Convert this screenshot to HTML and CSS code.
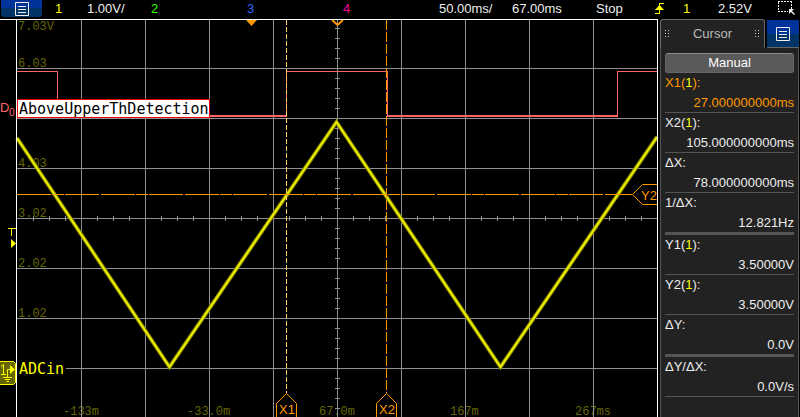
FILE: index.html
```html
<!DOCTYPE html>
<html lang="en">
<head>
<meta charset="utf-8">
<title>Oscilloscope</title>
<link rel="stylesheet" href="styles.css">
</head>
<body>
<div class="scope">
  <header class="status">
    <button class="menu menu-main" aria-label="Main menu">
      <svg width="14" height="14" viewBox="0 0 14 14"><path d="M.5.5h13v13H.5zM3 4.5h8M3 7.5h8M3 10.5h8"/></svg>
    </button>
    <div class="channel"><span class="ch1">1</span><span>1.00V/</span></div>
    <div class="channel ch2">2</div>
    <div class="channel ch3">3</div>
    <div class="channel ch4">4</div>
    <div>50.00ms/</div>
    <div>67.00ms</div>
    <div>Stop</div>
    <svg class="edge" width="10" height="12" viewBox="0 0 10 12"><path class="edge-line" d="M0 11.5h5M4.5 11V1M4 1.5h5"/><path class="edge-head" d="M0 8L4.5 3L9 8z"/></svg>
    <div class="ch1">1</div>
    <div>2.52V</div>
    <svg class="zone" width="20" height="16" viewBox="0 0 20 16"><path class="zone-box" d="M1 1.5h13M1.5 2v10M1 11.5h10M14.5 1v8"/><path class="zone-arrow" d="M12 9h5l-2 2 3 3-1 1-3-3-2 2z"/></svg>
  </header>

  <main class="plot">
    <svg class="screen" viewBox="0 19 660 398" role="img" aria-label="Waveform display">
      <g class="scale">
        <text x="18" y="30">7.03V</text>
        <text x="18" y="67">6.03</text>
        <text x="18" y="167">4.03</text>
        <text x="18" y="217">3.02</text>
        <text x="18" y="267">2.02</text>
        <text x="18" y="317">1.02</text>
        <text x="63" y="415">-133m</text>
        <text x="187" y="415">-33.0m</text>
        <text x="319" y="415">67.0m</text>
        <text x="450" y="415">167m</text>
        <text x="575" y="415">267ms</text>
      </g>
      <path class="grid" d="M81.5 20V417M145.5 20V417M209.5 20V417M273.5 20V417M337.5 20V417M401.5 20V417M465.5 20V417M529.5 20V417M593.5 20V417M17 68.5H657M17 118.5H657M17 168.5H657M17 218.5H657M17 268.5H657M17 318.5H657M17 368.5H657"/>
      <path class="ticks-x" d="M33 218.5H657"/>
      <path class="ticks-y" d="M337.5 28V417"/>
      <path class="digital" d="M17 71.5H57.5V100M286.5 117V71.5H387.5V117M617.5 117V71.5H657"/>
      <path class="digital digital-low" d="M210 116H287M387 116H618"/>
      <g class="name-tag">
        <rect x="17.5" y="99.5" width="192" height="18"/>
        <text x="19" y="114">AboveUpperThDetection</text>
      </g>
      <path class="trace-edge" d="M17 138L169.500 367L336.500 122L500.500 367L657 137"/>
      <path class="trace" d="M17 138L169.500 367L336.500 122L500.500 367L657 137"/>
      <path class="cursor cursor-x1" d="M286.500 20V393"/>
      <path class="cursor cursor-x2" d="M386.500 20V393"/>
      <path class="cursor cursor-y2" d="M17 194.500H632"/>
      <g class="flag">
        <path d="M276.500 418V403.500L286.500 393.500L296.500 403.500V418"/>
        <path d="M376.500 418V403.500L386.500 393.500L396.500 403.500V418"/>
        <path d="M657 184.500H642.500L632.500 194.500L642.500 204.500H657"/>
        <text x="279" y="414">X1</text>
        <text x="379" y="414">X2</text>
        <text x="641" y="200">Y2</text>
      </g>
      <path class="marker" d="M246 20H257L251.500 26z"/>
      <path class="marker-open" d="M332 20L337.500 25L343 20"/>
      <g class="analog-name">
        <rect x="17" y="360" width="49" height="16"/>
        <text x="19" y="374">ADCin</text>
      </g>
      <path class="frame" d="M0 19.500H657.500V417M16.500 20V417"/>
      <text class="digital-id" x="0" y="112">D</text>
      <text class="digital-id sub" x="9" y="116">0</text>
      <path class="level" d="M8 228.500H16M11.500 228V236"/>
      <path class="level-arrow" d="M11 239L16 243.500L11 248z"/>
      <g class="ground">
        <path class="ground-box" d="M0 361.500H13.500L15.500 363.500V382.500L13.500 384.500H0"/>
        <path class="ground-line" d="M1 366.500L3.500 364.500V374M1 374.500H6M7.500 377V369.500H12M3 377.500H12M5 379.500H10M6.500 381.500H9"/>
        <path class="ground-head" d="M10 365L15 369.500L10 374z"/>
      </g>
    </svg>
  </main>

  <aside class="panel">
    <div class="tabs">
      <h2 class="tab"><span class="grip"></span>Cursor<span class="grip"></span></h2>
      <button class="menu menu-side" aria-label="Panel menu">
        <svg width="14" height="14" viewBox="0 0 14 14"><path d="M.5.5h13v13H.5zM3 4.5h8M3 7.5h8M3 10.5h8"/></svg>
      </button>
    </div>
    <div class="readings">
      <button class="mode">Manual</button>
      <dl>
        <div class="row active"><dt>X1(<b>1</b>):</dt><dd>27.000000000ms</dd></div>
        <div class="row"><dt>X2(<b>1</b>):</dt><dd>105.000000000ms</dd></div>
        <div class="row"><dt>ΔX:</dt><dd>78.000000000ms</dd></div>
        <div class="row group-end"><dt>1/ΔX:</dt><dd>12.821Hz</dd></div>
        <div class="row"><dt>Y1(<b>1</b>):</dt><dd>3.50000V</dd></div>
        <div class="row"><dt>Y2(<b>1</b>):</dt><dd>3.50000V</dd></div>
        <div class="row group-end"><dt>ΔY:</dt><dd>0.0V</dd></div>
        <div class="row"><dt>ΔY/ΔX:</dt><dd>0.0V/s</dd></div>
      </dl>
    </div>
  </aside>
</div>
</body>
</html>
```
FILE: styles.css
```css
* { box-sizing: border-box; }

body {
  margin: 0;
  background: #000;
  color: #eee;
  font: 13px/18px "Liberation Sans", Arial, sans-serif;
  overflow: hidden;
}

.scope {
  display: grid;
  grid-template-columns: minmax(0, 1fr) 140px;
  grid-template-rows: 19px 1fr;
  min-height: 100vh;
}

/* Status bar */
.status {
  grid-column: 1 / -1;
  display: grid;
  grid-template-columns: 55fr 96fr 96fr 96fr 96fr 73fr 84fr 59fr 28fr 35fr 59fr 23fr;
  align-items: start;
  white-space: nowrap;
}
.channel { display: flex; }
.channel span:first-child { width: 32px; }
.ch1 { color: #ff0; }
.ch2 { color: #3f0; }
.ch3 { color: #36f; }
.ch4 { color: #f09; }

.menu {
  display: flex;
  align-items: center;
  justify-content: center;
  padding: 0;
  border: 0;
  background: linear-gradient(#039 50%, #036 50%);
}
.menu path { fill: none; stroke: #eee; }
.menu-main {
  width: 41px;
  height: 17px;
  margin-left: 1px;
  border-radius: 0 0 3px 3px;
}

.edge { margin-top: 2px; }
.edge-line { fill: none; stroke: #ff0; }
.edge-head { fill: #ff0; }
.zone-box { fill: none; stroke: #eee; stroke-dasharray: 2 1; }
.zone-arrow { fill: #eee; }

/* Waveform display */
.screen { display: block; width: 100%; }
.scale text {
  fill: #660;
  font: 12px "Liberation Mono", monospace;
}
.grid, .ticks-x, .ticks-y, .frame, .digital, .cursor, .level {
  fill: none;
  stroke: #909090;
  shape-rendering: crispEdges;
}
.ticks-x { stroke-width: 5; stroke-dasharray: 1 15; }
.ticks-y { stroke-width: 5; stroke-dasharray: 1 9; }
.frame { stroke: #fff; }
.digital { stroke: #f66; }
.digital-low { stroke-width: 2; }
.digital-id { fill: #f66; font-size: 13px; }
.digital-id.sub { font-size: 10px; }

.name-tag rect { fill: #fff; stroke: #e00; shape-rendering: crispEdges; }
.name-tag text, .analog-name text { font: 15px "DejaVu Sans Mono", monospace; }
.analog-name rect { fill: #000; }
.analog-name text { fill: #ff0; }

.trace-edge { fill: none; stroke: #880; stroke-width: 4; }
.trace { fill: none; stroke: #ee0; stroke-width: 2; }

.cursor { stroke: #f90; }
.cursor-x1 { stroke: #fc6; stroke-dasharray: 5 2; }
.cursor-x2 { stroke-dasharray: 10 2; }
.cursor-y2 { stroke-dasharray: 34 1 12 1 34 2; }
.flag path { fill: #000; stroke: #f90; }
.flag text { fill: #f90; font-size: 13px; }
.marker { fill: #f90; }
.marker-open { fill: none; stroke: #f90; stroke-width: 2; }

.level { stroke: #ff0; }
.level-arrow, .ground-head { fill: #ff0; }
.ground-box { fill: #660; stroke: #ff0; }
.ground-line { fill: none; stroke: #ff0; }

/* Cursor panel */
.panel {
  display: flex;
  flex-direction: column;
  padding-right: 1px;
}
.tabs { display: flex; height: 29px; }
.tab {
  flex: 1;
  display: flex;
  align-items: center;
  justify-content: space-between;
  margin: 0;
  padding: 0 4px;
  border: 1px solid #666;
  border-width: 1px 1px 0 1px;
  border-radius: 3px 3px 0 0;
  background: #222;
  color: #bbb;
  font-size: 13px;
  font-weight: normal;
}
.grip {
  width: 5px;
  height: 8px;
  background: conic-gradient(#ccc 90deg, transparent 0) 0 0 / 3px 3px;
  background: linear-gradient(#222, #222) 1px 0 / 2px 8px no-repeat, repeating-linear-gradient(#ccc 0 1px, transparent 1px 3px) 0 0 / 4px 8px no-repeat;
}
.menu-side {
  width: 32px;
  height: 28px;
  margin: 1px 0 0 2px;
  border-bottom: 1px solid #666;
}
.readings {
  flex: 1;
  padding: 5px 4px 0;
  border: 1px solid #555;
  border-width: 0 1px;
  background: #222;
}
.mode {
  display: block;
  width: 100%;
  height: 20px;
  padding: 0;
  border: 1px solid #888;
  border-color: #888 #666 #666;
  border-radius: 3px;
  background: #5a5a5a;
  color: #fff;
  font: inherit;
}
dl { margin: 0; }
.row { border-bottom: 1px solid #555; }
.group-end { border-bottom-width: 3px; }
dt { line-height: 20px; }
dd { margin: 0; line-height: 19px; text-align: right; }
b { color: #ff0; font-weight: normal; }
.active { color: #f90; }
```
